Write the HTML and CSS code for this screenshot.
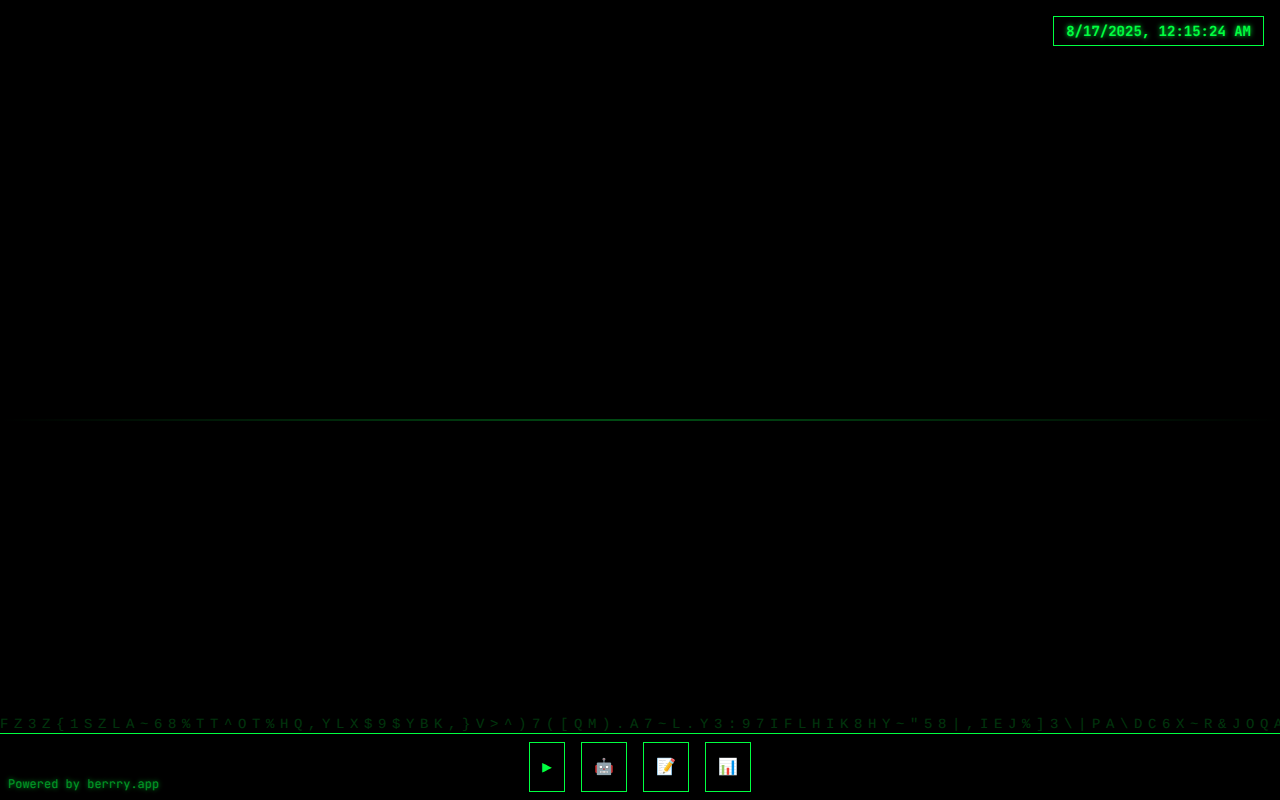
FILE: index.html
```html
<!DOCTYPE html>
<html lang="en">
<head>
  <meta charset="UTF-8" />
  <meta name="viewport" content="width=device-width, initial-scale=1.0"/>
  <title>Terminal Desktop</title>
  <link rel="stylesheet" href="styles.css">
</head>
<body>
  <main class="desktop">
    <div class="scanline"></div>
    <time class="clock" id="clock">8/17/2025, 12:15:24 AM</time>
    <div class="rain" id="rain" aria-hidden="true"></div>
  </main>

  <nav class="taskbar" aria-label="Taskbar">
    <button class="task" type="button" aria-label="Terminal">▶</button>
    <button class="task" type="button" aria-label="Assistant">🤖</button>
    <button class="task" type="button" aria-label="Notes">📝</button>
    <button class="task" type="button" aria-label="Stats">📊</button>
  </nav>

  <a class="credit" href="#">Powered by berrry.app</a>

  <script src="script.js"></script>
</body>
</html>
```
FILE: styles.css
```css
* {
  box-sizing: border-box;
}

body {
  margin: 0;
  min-height: 100vh;
  display: flex;
  flex-direction: column;
  background-color: #000;
  color: #00ff41;
  font-family: 'JetBrains Mono', 'DejaVu Sans Mono', monospace;
  text-rendering: geometricPrecision;
  overflow: hidden;
}

.desktop {
  flex: 1;
  display: flex;
  flex-direction: column;
  justify-content: space-between;
  align-items: flex-end;
  padding-top: 16px;
}

.clock {
  margin-right: 16px;
  padding: 5px 12px 3px;
  border: 1px solid #00ff41;
  font-size: 14px;
  font-weight: bold;
  line-height: 20px;
  text-shadow: 0 0 5px #00ff41;
}

/* light sweep across the screen */
.scanline {
  position: absolute;
  top: 419px;
  left: 0;
  width: 100%;
  height: 2px;
  background: linear-gradient(90deg, transparent, #00ff41, transparent);
  opacity: 0.3;
}

.rain {
  width: 100%;
  display: flex;
  overflow: hidden;
  color: #00ff41;
  font-family: 'Liberation Mono', monospace;
  font-size: 14px;
  line-height: 16px;
  opacity: 0.2;
}

.rain span {
  flex: 0 0 14px;
}

.taskbar {
  display: flex;
  justify-content: center;
  gap: 16px;
  padding: 8px;
  border-top: 1px solid #00ff41;
}

.task {
  padding: 12px;
  border: 1px solid #00ff41;
  background: transparent;
  color: #00ff41;
  font-family: 'DejaVu Sans Mono', monospace;
  font-size: 16px;
  line-height: 24px;
  cursor: pointer;
}

.task:hover {
  background-color: #003b0f;
}

.credit {
  position: absolute;
  left: 8px;
  bottom: 8px;
  color: #00ff41;
  font-size: 12px;
  line-height: 16px;
  text-decoration: none;
  text-shadow: 0 0 5px #00ff41;
  opacity: 0.6;
}
```
FILE: script.js
```js
const rain = document.getElementById('rain');

const row = 'FZ3Z{1SZLA~68%TT^OT%HQ,'
  + 'YLX$9$YBK,}V>^)7([QM).A'
  + '7~L.Y3:97IFLHIK8HY~"58|'
  + ',IEJ%]3\\|PA\\DC6X~R&JOQA';

// one column for each character
for (const char of row) {
  const column = document.createElement('span');
  column.textContent = char;
  rain.appendChild(column);
}
```
